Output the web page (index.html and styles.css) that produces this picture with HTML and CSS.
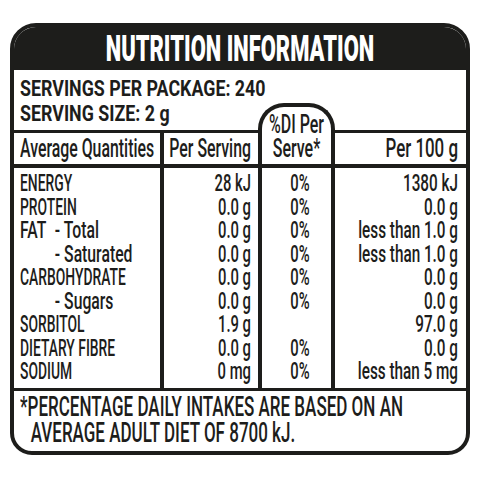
FILE: index.html
```html
<!DOCTYPE html>
<html lang="en">
<head>
  <meta charset="UTF-8" />
  <title>Nutrition Information</title>
  <link rel="stylesheet" href="styles.css">
</head>
<body>

  <div class="label">
    <div class="title"><div class="sq">NUTRITION INFORMATION</div></div>

    <div class="servings">
      <div class="sq">SERVINGS PER PACKAGE: 240</div>
      <div class="sq">SERVING SIZE: 2 g</div>
    </div>

    <div class="facts">
      <!-- header row -->
      <div class="head left names"><div class="sq">Average Quantities</div></div>
      <div class="head right serve"><div class="sq">Per Serving</div></div>
      <div class="head di">
        <div class="tab">
          <div class="sq">%DI Per</div>
          <div class="sq">Serve*</div>
        </div>
      </div>
      <div class="head right hundred"><div class="sq">Per 100 g</div></div>

      <!-- values -->
      <div class="rows left names">
        <div class="sq">ENERGY</div>
        <div class="sq">PROTEIN</div>
        <div class="sq sub"><span class="lead">FAT</span>- Total</div>
        <div class="sq sub indent">- Saturated</div>
        <div class="sq">CARBOHYDRATE</div>
        <div class="sq sub indent">- Sugars</div>
        <div class="sq">SORBITOL</div>
        <div class="sq">DIETARY FIBRE</div>
        <div class="sq">SODIUM</div>
      </div>
      <div class="rows right serve">
        <div class="sq">28 kJ</div>
        <div class="sq">0.0 g</div>
        <div class="sq">0.0 g</div>
        <div class="sq">0.0 g</div>
        <div class="sq">0.0 g</div>
        <div class="sq">0.0 g</div>
        <div class="sq">1.9 g</div>
        <div class="sq">0.0 g</div>
        <div class="sq">0 mg</div>
      </div>
      <div class="rows center di">
        <div class="sq">0%</div>
        <div class="sq">0%</div>
        <div class="sq">0%</div>
        <div class="sq">0%</div>
        <div class="sq">0%</div>
        <div class="sq">0%</div>
        <div class="sq">&nbsp;</div>
        <div class="sq">0%</div>
        <div class="sq">0%</div>
      </div>
      <div class="rows right hundred">
        <div class="sq">1380 kJ</div>
        <div class="sq">0.0 g</div>
        <div class="sq">less than 1.0 g</div>
        <div class="sq">less than 1.0 g</div>
        <div class="sq">0.0 g</div>
        <div class="sq">0.0 g</div>
        <div class="sq">97.0 g</div>
        <div class="sq">0.0 g</div>
        <div class="sq">less than 5 mg</div>
      </div>
    </div>

    <div class="note">
      <div class="sq">*PERCENTAGE DAILY INTAKES ARE BASED ON AN</div>
      <div class="sq hang">AVERAGE ADULT DIET OF 8700 kJ.</div>
    </div>
  </div>

</body>
</html>
```

FILE: styles.css
```css
* {
  box-sizing: border-box;
}
body {
  margin: 0;
  background: #fff;
  color: #1d1d1b;
  font-family: Roboto, "Liberation Sans", Arial, sans-serif;
  font-weight: 500;
}

/* condensed type: text is laid out wide, then squeezed back into its box */
.sq {
  width: calc(100% / var(--sx));
  transform: scaleX(var(--sx));
  transform-origin: 0 0;
  white-space: nowrap;
}

.label {
  width: 460px;
  margin: 23px auto 0;
  border: 4px solid #1d1d1b;
  border-radius: 26px 26px 22px 22px;
  overflow: hidden;
  background: #fff;
}

.title {
  --sx: .585;
  height: 43px;
  background: #1d1d1b;
  color: #fff;
  font-size: 37.5px;
  line-height: 43px;
  font-weight: 900;
  text-align: center;
}

.servings {
  --sx: .81;
  height: 63px;
  padding: 6px 6px 0;
  border-bottom: 3px solid #1d1d1b;
  font-size: 22px;
  line-height: 25px;
  font-weight: 700;
}

.facts {
  display: grid;
  grid-template-columns: 146px 94px 69px 131px;
  gap: 4px;
  background: #1d1d1b;
}
.facts > div {
  min-width: 0;
  background: #fff;
}

.left { text-align: left; padding-left: 6px; }
.right { text-align: right; }
.center { text-align: center; }
.serve { padding-right: 7px; }
.hundred { padding-right: 8px; }

.head {
  --sx: .61;
  height: 31px;
  font-size: 26px;
  line-height: 31px;
}
.head.hundred { --sx: .65; }

.head.di {
  position: relative;
}
.tab {
  --sx: .64;
  position: absolute;
  top: -30px;
  bottom: 0;
  left: -4px;
  right: -4px;
  padding-top: 6px;
  border: 4px solid #1d1d1b;
  border-bottom: 0;
  border-radius: 26px 26px 0 0;
  background: #fff;
  text-align: center;
  font-size: 25px;
  line-height: 23.5px;
}

.rows {
  --sx: .63;
  padding-top: 4px;
  padding-bottom: 4.5px;
  font-size: 23.5px;
  line-height: 23.5px;
}
.rows.names { --sx: .59; }
.rows.di { padding-left: 7px; }
.rows.hundred { --sx: .65; }

/* lower-case sub rows of the first column run a little wider */
.rows .sub { --sx: .67; }
.lead {
  display: inline-block;
  width: 52px;
}
.indent {
  padding-left: 52px;
}

.note {
  --sx: .63;
  height: 63px;
  padding: 2.5px 6px 0;
  border-top: 3px solid #1d1d1b;
  font-size: 27px;
  line-height: 26.7px;
}
.hang {
  padding-left: 17px;
}
```
